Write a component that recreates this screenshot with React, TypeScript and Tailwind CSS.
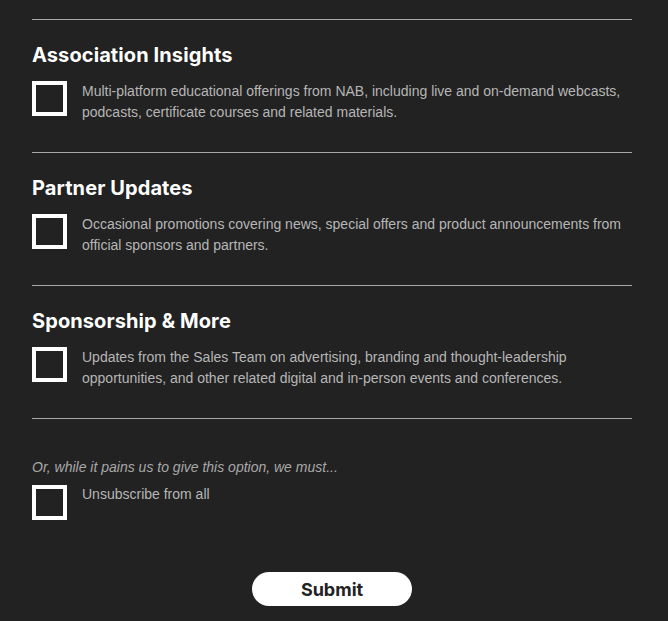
import React, { useState } from 'react';

const sections = [
  {
    title: 'Association Insights',
    body: 'Multi-platform educational offerings from NAB, including live and on-demand webcasts, podcasts, certificate courses and related materials.',
  },
  {
    title: 'Partner Updates',
    body: 'Occasional promotions covering news, special offers and product announcements from official sponsors and partners.',
  },
  {
    title: 'Sponsorship & More',
    body: 'Updates from the Sales Team on advertising, branding and thought-leadership opportunities, and other related digital and in-person events and conferences.',
  },
];

function Box({ checked, onClick }: { checked: boolean; onClick: () => void }) {
  return (
    <button
      type="button"
      onClick={onClick}
      className="w-[35px] h-[35px] shrink-0 border-4 border-white bg-transparent flex items-center justify-center"
    >
      {checked && <span className="w-[15px] h-[15px] bg-white" />}
    </button>
  );
}

export default function App() {
  const [checks, setChecks] = useState<boolean[]>([false, false, false, false]);
  const toggle = (i: number) => setChecks(c => c.map((v, j) => (j === i ? !v : v)));

  return (
    <div className="min-h-[621px] bg-[#222222] pt-[19px] pb-[15px]" style={{ fontFamily: '"Liberation Sans", Arial, sans-serif' }}>
      <div className="w-[600px] ml-8">
        {sections.map((s, i) => (
          <section key={s.title} className="border-t border-[#a9a9a9] pt-[22px] pb-[29px]">
            <h2 className="text-white text-[20px] leading-[26px] font-bold tracking-[0.1px] mb-[13px] font-['Inter',sans-serif]">{s.title}</h2>
            <div className="flex items-start gap-[15px]">
              <Box checked={checks[i]} onClick={() => toggle(i)} />
              <p className="text-[#b6b6b6] text-[14px] leading-[21px]">{s.body}</p>
            </div>
          </section>
        ))}
        <section className="border-t border-[#a9a9a9] pt-[38px]">
          <p className="text-[#a8a8a8] text-[14px] leading-[21px] italic mb-[7px]">Or, while it pains us to give this option, we must...</p>
          <div className="flex items-start gap-[15px]">
            <Box checked={checks[3]} onClick={() => toggle(3)} />
            <p className="text-[#b6b6b6] text-[14px] leading-[21px] -mt-px">Unsubscribe from all</p>
          </div>
          <div className="flex justify-center mt-[52px]">
            <button type="button" className="w-[160px] h-[34px] rounded-full bg-white text-[#222222] text-[18px] font-bold font-['Inter',sans-serif]">
              Submit
            </button>
          </div>
        </section>
      </div>
    </div>
  );
}
